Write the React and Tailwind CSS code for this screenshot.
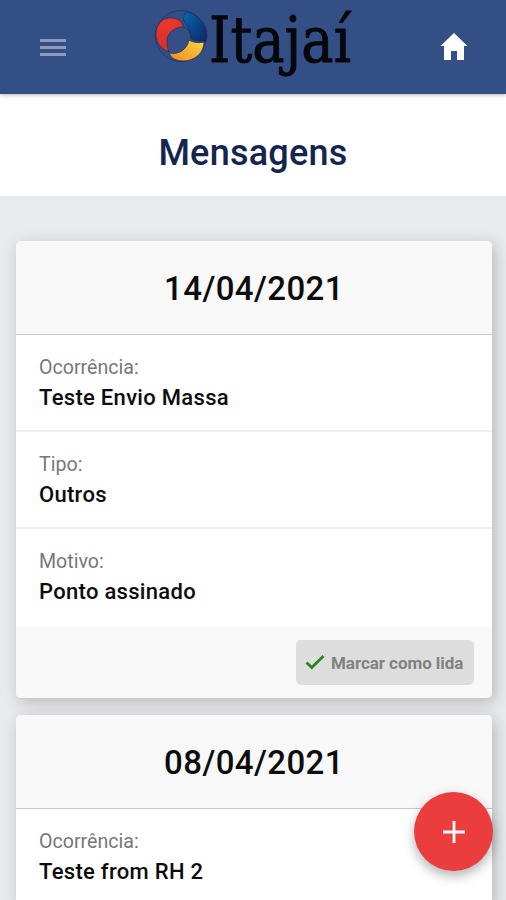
import React from 'react'

const messages = [
  {
    date: '14/04/2021',
    unread: true,
    fields: [
      { label: 'Ocorrência:', value: 'Teste Envio Massa' },
      { label: 'Tipo:', value: 'Outros' },
      { label: 'Motivo:', value: 'Ponto assinado' },
    ],
  },
  {
    date: '08/04/2021',
    unread: false,
    fields: [{ label: 'Ocorrência:', value: 'Teste from RH 2' }],
  },
]

function Logo() {
  return (
    <svg width="204" height="90" viewBox="0 0 204 90" role="img" aria-label="Itajaí">
      <defs>
        <linearGradient id="red" x1="0" y1="0" x2="0" y2="1">
          <stop offset="0" stopColor="#ec352c" />
          <stop offset="1" stopColor="#d8302b" />
        </linearGradient>
        <linearGradient id="blue" x1="0" y1="0" x2="1" y2="1">
          <stop offset="0" stopColor="#0868b0" />
          <stop offset="1" stopColor="#0c2464" />
        </linearGradient>
        <linearGradient id="yellow" x1="1" y1="0" x2="0" y2="1">
          <stop offset="0" stopColor="#fbd63c" />
          <stop offset="1" stopColor="#f08a24" />
        </linearGradient>
      </defs>
      <g stroke="#22305c" strokeWidth="0.8" strokeLinejoin="round">
        <circle cx="29" cy="36" r="25.5" fill="none" />
        <path fill="url(#blue)" d="M32 21C31 17 32 13 35 12C46 14 55 24 55 35C55 38 54 41 53 42C48 42 43 41 39 39C38 31 36 26 32 21Z" />
        <path fill="url(#red)" d="M17 52C7 48 3 40 4 32C5 23 11 17 20 18C26 18 31 22 31 27C23 27 16 32 15 40C15 45 16 49 17 52Z" />
        <path fill="url(#yellow)" d="M17 53C26 55 35 50 37 40C42 43 48 43 52 42C52 53 43 61 31 61C24 61 19 58 17 53Z" />
        <path fill="none" d="M31 27C36 28 40 34 39 39" />
      </g>
      <text
        x="57"
        y="61.5"
        fontFamily="DejaVu Serif, serif"
        fontSize="64"
        textLength="142"
        lengthAdjust="spacingAndGlyphs"
        fill="#05070c"
        stroke="#05070c"
        strokeWidth="1"
        strokeLinejoin="round"
      >
        Itajaí
      </text>
    </svg>
  )
}

function Header() {
  return (
    <header className="relative z-10 flex h-[94px] shrink-0 items-center bg-[#344f86] shadow-[0_1px_4px_rgba(0,0,0,0.3)]">
      <button className="ml-10 flex w-[26px] flex-col gap-1" aria-label="Menu">
        <span className="h-[3px] bg-[#8d9cbe]" />
        <span className="h-[3px] bg-[#8d9cbe]" />
        <span className="h-[3px] bg-[#8d9cbe]" />
      </button>
      <div className="ml-[86px] self-start">
        <Logo />
      </div>
      <button className="ml-auto mr-[38px]" aria-label="Home">
        <svg width="28" height="28" viewBox="0 0 28 28" fill="#fff">
          <path d="M14 0L0.5 13H4V27H11V18H17V27H24V13H27.5Z" />
        </svg>
      </button>
    </header>
  )
}

function MessageCard({ date, unread, fields }) {
  return (
    <article className="flex flex-col rounded-[5px] bg-white shadow-[3px_4px_16px_rgba(0,0,0,0.22)]">
      <h2 className="flex h-[94px] items-center justify-center rounded-t-[5px] border-b border-[#c8c8c8] bg-[#f8f8f8] pt-[3px] text-[33px] font-medium tracking-[0.4px] text-[#0c0c0c]">
        {date}
      </h2>
      {fields.map((field) => (
        <div key={field.label} className="h-[97px] border-b-2 border-[#eeeeee] pl-[23px] pt-[18px] last-of-type:border-b-0">
          <p className="text-[19.6px] leading-[30px] text-[#777]">{field.label}</p>
          <p className="text-[22px] font-medium leading-[30px] tracking-[0.3px] text-[#0c0c0c]">{field.value}</p>
        </div>
      ))}
      {unread && (
        <footer className="flex h-[72px] items-center justify-end rounded-b-[5px] bg-[#f8f8f8] pr-[18px]">
          <button className="flex h-[45px] w-[178px] items-center gap-1.5 rounded-[5px] bg-[#dddddd] pl-[9px] text-[17px] font-bold tracking-[-0.05px] whitespace-nowrap text-[#818181]">
            <svg className="shrink-0" width="20" height="16" viewBox="0 0 20 16" fill="none" stroke="#298619" strokeWidth="2.8">
              <path d="M1.5 8.5L6.8 13.5L18.5 2" />
            </svg>
            <span className="pt-[3px]">Marcar como lida</span>
          </button>
        </footer>
      )}
    </article>
  )
}

function App() {
  return (
    <div className="relative flex h-screen flex-col overflow-hidden bg-[#e8eaed] font-['Roboto',sans-serif]">
      <Header />
      <h1 className="flex h-[102px] shrink-0 items-center justify-center bg-white pt-4 text-[36px] font-medium tracking-[0.25px] text-[#14264d]">
        Mensagens
      </h1>
      <main className="flex flex-col gap-[16.5px] pt-[45px] pl-4 pr-[14px]">
        {messages.map((message) => (
          <MessageCard key={message.date} {...message} />
        ))}
      </main>
      <button
        className="absolute right-[13px] bottom-[29px] flex size-[79px] items-center justify-center rounded-full bg-[#eb3d3d] shadow-[0_5px_12px_rgba(0,0,0,0.3)]"
        aria-label="Nova mensagem"
      >
        <svg width="22" height="22" viewBox="0 0 22 22" stroke="#fff" strokeWidth="2.8">
          <path d="M11 0V22M0 11H22" />
        </svg>
      </button>
    </div>
  )
}

export default App
